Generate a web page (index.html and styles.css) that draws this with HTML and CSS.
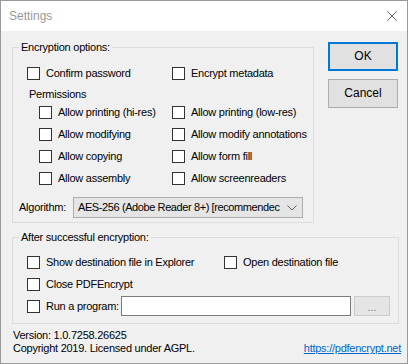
FILE: index.html
```html
<!DOCTYPE html>
<html lang="en">
<head>
    <meta charset="UTF-8">
    <title>Settings</title>
    <link rel="stylesheet" href="styles.css">
</head>
<body>
    <div class="window">
        <div class="titlebar">
            <span class="title">Settings</span>
            <svg class="close" width="12" height="12" viewBox="0 0 12 12">
                <path d="M1 1 L11 11 M11 1 L1 11" stroke="#6e6e6e" stroke-width="1" fill="none"/>
            </svg>
        </div>

        <div class="content">
            <div class="top">
                <fieldset class="group group-enc">
                    <legend>Encryption options:</legend>
                    <div class="row">
                        <label class="check col-a"><span class="box"></span>Confirm password</label>
                        <label class="check"><span class="box"></span>Encrypt metadata</label>
                    </div>
                    <div class="perm-title">Permissions</div>
                    <div class="perms">
                        <div class="row">
                            <label class="check col-b"><span class="box"></span>Allow printing (hi-res)</label>
                            <label class="check"><span class="box"></span>Allow printing (low-res)</label>
                        </div>
                        <div class="row">
                            <label class="check col-b"><span class="box"></span>Allow modifying</label>
                            <label class="check"><span class="box"></span>Allow modify annotations</label>
                        </div>
                        <div class="row">
                            <label class="check col-b"><span class="box"></span>Allow copying</label>
                            <label class="check"><span class="box"></span>Allow form fill</label>
                        </div>
                        <div class="row">
                            <label class="check col-b"><span class="box"></span>Allow assembly</label>
                            <label class="check"><span class="box"></span>Allow screenreaders</label>
                        </div>
                    </div>
                    <div class="algo">
                        <span class="algo-label">Algorithm:</span>
                        <div class="combo">
                            <span class="combo-text">AES-256 (Adobe Reader 8+) [recommendec</span>
                            <svg class="chevron" width="10" height="6" viewBox="0 0 10 6">
                                <path d="M0.5 0.5 L5 5 L9.5 0.5" stroke="#606060" stroke-width="1" fill="none"/>
                            </svg>
                        </div>
                    </div>
                </fieldset>

                <div class="buttons">
                    <button class="btn btn-default">OK</button>
                    <button class="btn">Cancel</button>
                </div>
            </div>

            <fieldset class="group group-after">
                <legend>After successful encryption:</legend>
                <div class="row">
                    <label class="check col-c"><span class="box"></span>Show destination file in Explorer</label>
                    <label class="check"><span class="box"></span>Open destination file</label>
                </div>
                <div class="row">
                    <label class="check"><span class="box"></span>Close PDFEncrypt</label>
                </div>
                <div class="row">
                    <label class="check col-d"><span class="box"></span>Run a program:</label>
                    <div class="textbox"></div>
                    <button class="btn-browse">...</button>
                </div>
            </fieldset>

            <div class="footer">
                <div class="about">
                    <div>Version: 1.0.7258.26625</div>
                    <div>Copyright 2019. Licensed under AGPL.</div>
                </div>
                <a class="site" href="#">https://pdfencrypt.net</a>
            </div>
        </div>
    </div>
</body>
</html>
```

FILE: styles.css
```css
* {
    box-sizing: border-box;
}

body {
    margin: 0;
    font-family: "Liberation Sans", Arial, sans-serif;
    font-size: 11px;
    letter-spacing: -0.25px;
    line-height: 13px;
    color: #000;
}

.window {
    width: 408px;
    height: 364px;
    border: 1px solid #9a9a9a;
    background: #f0f0f0;
    overflow: hidden;
}

.titlebar {
    height: 30px;
    background: #fff;
    display: flex;
    align-items: center;
    justify-content: space-between;
    padding: 0 9px 0 8px;
}

.title {
    font-size: 12px;
    color: #999;
    letter-spacing: 0;
}

.content {
    padding: 9px 8px 0 11px;
}

.top {
    display: flex;
    align-items: flex-start;
}

.group {
    margin: 0;
    border: 1px solid #dcdcdc;
    min-width: 0;
}

.group legend {
    padding: 0 2px;
    margin-left: -8px;
    line-height: 14px;
}

.group-enc {
    width: 302px;
    padding: 8px 0 4px 14px;
}

.row {
    height: 22px;
    display: flex;
    align-items: center;
}

.check {
    display: flex;
    align-items: center;
    white-space: nowrap;
}

.box {
    width: 13px;
    height: 13px;
    border: 1px solid #333;
    background: #fff;
    margin-right: 6px;
    flex: none;
}

.col-a {
    width: 145px;
}

.col-b {
    width: 133px;
}

.col-c {
    width: 197px;
}

.col-d {
    width: 94px;
}

.perm-title {
    margin: 3px 0 0 2px;
    line-height: 14px;
}

.perms {
    padding-left: 12px;
}

.algo {
    display: flex;
    align-items: center;
    margin: 8px 0 0 -8px;
}

.algo-label {
    width: 54px;
}

.combo {
    width: 230px;
    height: 21px;
    border: 1px solid #adadad;
    background: #e5e5e5;
    display: flex;
    align-items: center;
    padding: 0 5px 0 4px;
}

.combo-text {
    flex: 1;
    white-space: nowrap;
    letter-spacing: -0.4px;
}

.chevron {
    margin-left: 2px;
    flex: none;
}

.buttons {
    margin-left: 14px;
    padding-top: 2px;
    display: flex;
    flex-direction: column;
    gap: 8px;
}

.btn {
    width: 70px;
    height: 29px;
    border: 1px solid #adadad;
    background: #e1e1e1;
    font: inherit;
    letter-spacing: 0;
    font-size: 12px;
    color: #000;
    padding: 0;
}

.btn-default {
    border: 2px solid #0078d7;
}

.group-after {
    margin-top: 7px;
    padding: 7px 0 6px 14px;
}

.textbox {
    width: 230px;
    height: 20px;
    border: 1px solid #7a7a7a;
    background: #fff;
}

.btn-browse {
    width: 36px;
    height: 20px;
    margin-left: 3px;
    border: 1px solid #cccccc;
    background: #e5e5e5;
    color: #7a7a7a;
    font: inherit;
    padding: 3px 0 0;
}

.footer {
    margin-top: 5px;
    padding-left: 1px;
    display: flex;
    justify-content: space-between;
    align-items: flex-end;
}

.site {
    color: #0066cc;
    margin-right: -2px;
}
```
